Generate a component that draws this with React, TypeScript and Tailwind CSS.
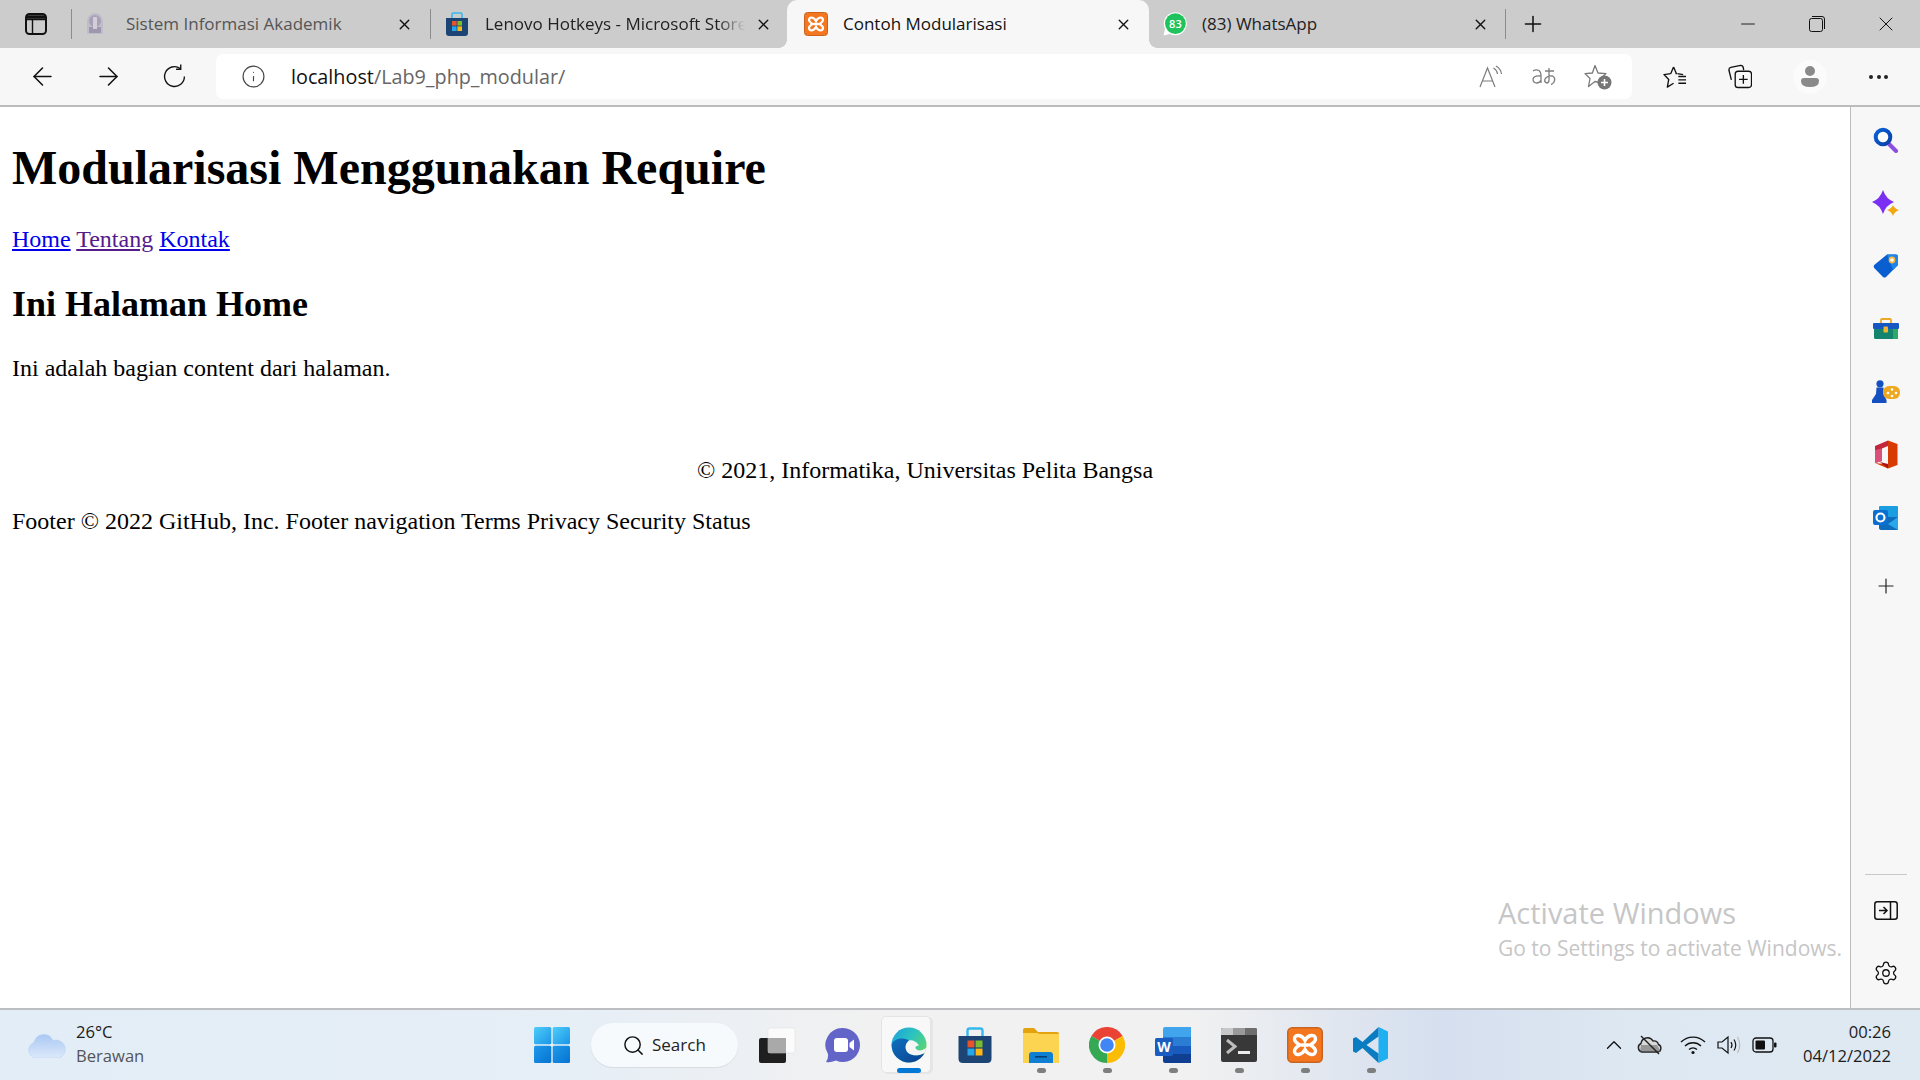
import React from "react";
import { ArrowLeft, ArrowRight, ChevronUp, Info, Minus, Plus, Search, Settings, X } from "lucide-react";

// tab favicons
const SealIcon = () => (
  <svg width="18" height="24" viewBox="0 0 18 24" className="opacity-60">
    <path d="M9 1 C14 1 17 5 17 10 L17 22 L1 22 L1 10 C1 5 4 1 9 1Z" fill="#b9b2c9" />
    <circle cx="9" cy="9" r="6" fill="#8f86ab" />
    <rect x="3" y="15" width="12" height="6" fill="#7d7499" />
    <rect x="7" y="5" width="4" height="12" fill="#d5d0df" />
  </svg>
);

const StoreIcon = ({ size = 24 }: { size?: number }) => (
  <svg width={size} height={size} viewBox="0 0 24 24">
    <path d="M7 6 V2.5 Q7 1 8.5 1 H15.5 Q17 1 17 2.5 V6" fill="none" stroke="#35b8ee" strokeWidth="1.6" />
    <path d="M1 6 H23 V21 Q23 24 20 24 H4 Q1 24 1 21Z" fill="#1c4474" />
    <rect x="7" y="9" width="4.6" height="4.6" fill="#e8532b" />
    <rect x="12.4" y="9" width="4.6" height="4.6" fill="#7ebb2c" />
    <rect x="7" y="14.4" width="4.6" height="4.6" fill="#25a5ea" />
    <rect x="12.4" y="14.4" width="4.6" height="4.6" fill="#fcb714" />
  </svg>
);

const XamppIcon = ({ size = 24 }: { size?: number }) => (
  <svg width={size} height={size} viewBox="0 0 24 24">
    <rect x="0.5" y="0.5" width="23" height="23" rx="3" fill="#f4761f" stroke="#c9641f" />
    <path
      d="M12 9 C10 5 5 4.5 5 8 C5 10 7 11 8.5 12 C7 13 5 14 5 16 C5 19.5 10 19 12 15 C14 19 19 19.5 19 16 C19 14 17 13 15.5 12 C17 11 19 10 19 8 C19 4.5 14 5 12 9Z M9.5 12 H14.5"
      fill="none"
      stroke="#fff"
      strokeWidth="2.3"
    />
  </svg>
);

const WhatsAppIcon = () => (
  <svg width="24" height="24" viewBox="0 0 24 24">
    <path d="M0.5 23.5 L2 17 A11.5 11.5 0 1 1 7 22Z" fill="#fff" />
    <circle cx="12.4" cy="11.6" r="10.4" fill="#1fc25c" />
    <text x="12.4" y="15.6" textAnchor="middle" fontSize="11" fontWeight="600" fill="#fff" fontFamily="Open Sans">
      83
    </text>
  </svg>
);

// edge sidebar
const SideSearch = () => (
  <svg width="26" height="26" viewBox="0 0 26 26">
    <defs>
      <linearGradient id="ss" x1="0" y1="0" x2="1" y2="1">
        <stop offset="0" stopColor="#0a63d8" />
        <stop offset="1" stopColor="#0b3fa8" />
      </linearGradient>
    </defs>
    <path d="M15 16 L23 24" stroke="#8a4fe0" strokeWidth="4" strokeLinecap="round" />
    <circle cx="10" cy="10" r="7.3" fill="#fff" stroke="url(#ss)" strokeWidth="4" />
  </svg>
);

const SideSpark = () => (
  <svg width="28" height="26" viewBox="0 0 28 26">
    <path d="M11 0 Q14 9 22 12 Q14 15 11 24 Q8 15 0 12 Q8 9 11 0Z" fill="#7b2ff2" />
    <path d="M21 15 Q22.5 18.5 27 20 Q22.5 21.5 21 26 Q19.5 21.5 15 20 Q19.5 18.5 21 15Z" fill="#f2a811" />
  </svg>
);

const SideTag = () => (
  <svg width="26" height="24" viewBox="0 0 26 24">
    <path d="M14 0.5 H23 Q25 0.5 25 2.5 V11 L13 23 Q11.5 24 10 23 L1.2 14 Q0 12.5 1.2 11Z" fill="#0a5fd0" />
    <path d="M14 0.5 H23 Q25 0.5 25 2.5 V11 L20 16Z" fill="#1f86e8" />
    <circle cx="19" cy="6" r="2.6" fill="#fff" stroke="#f6b73c" strokeWidth="1.6" />
  </svg>
);

const SideBox = () => (
  <svg width="26" height="22" viewBox="0 0 26 22">
    <path d="M8 5 V2 Q8 1 9 1 H17 Q18 1 18 2 V5" fill="none" stroke="#eaa824" strokeWidth="1.8" />
    <rect x="1" y="10" width="24" height="11" rx="1.5" fill="#14846f" />
    <rect x="20" y="10" width="5" height="11" fill="#2fa96a" />
    <rect x="0" y="5" width="26" height="6" rx="1" fill="#1558c4" />
    <rect x="10.5" y="8.5" width="4.5" height="6" rx="1" fill="#f3b52f" />
  </svg>
);

const SideGames = () => (
  <svg width="28" height="24" viewBox="0 0 28 24">
    <circle cx="8" cy="3.8" r="3.6" fill="#1550c0" />
    <path d="M4.5 7.5 H11.5 L11.5 14 L14.5 20 V23 H0 V20 L4 14Z" fill="#1550c0" />
    <rect x="11" y="6" width="17" height="13" rx="6" fill="#eea820" />
    <circle cx="16" cy="13" r="1.3" fill="#fff" />
    <circle cx="20" cy="9.5" r="1.3" fill="#fff" />
    <circle cx="24" cy="13" r="1.3" fill="#fff" />
    <circle cx="20" cy="16" r="1.3" fill="#fff" />
  </svg>
);

const SideOffice = () => (
  <svg width="24" height="29" viewBox="0 0 24 29">
    <path d="M14 0.5 L23.5 4 V25 L14 28.5 L1 23 L14 24.5Z" fill="#d83b01" />
    <path d="M1 6 L14 0.5 V6 L8 8.5 V21 L1 23Z" fill="#c2273a" />
    <path d="M1 10 L8 8.5 V21 L1 23Z" fill="#d9517a" />
    <path d="M6 22 L14 24 V28.5 Z" fill="#a8141e" />
  </svg>
);

const SideOutlook = () => (
  <svg width="26" height="24" viewBox="0 0 26 24">
    <rect x="6" y="0" width="19" height="13" rx="1" fill="#1b9de2" />
    <path d="M6 11 L25 11 V24 H9 Q6 24 6 22Z" fill="#0f6cbd" />
    <path d="M25 11 L15 18 L25 24Z" fill="#28a8ea" />
    <rect x="0" y="4" width="15" height="15" rx="2" fill="#0a6fd0" />
    <circle cx="7.5" cy="11.5" r="4" fill="none" stroke="#fff" strokeWidth="2.2" />
  </svg>
);

// taskbar
const WinLogo = () => (
  <svg width="36" height="36" viewBox="0 0 36 36">
    <defs>
      <linearGradient id="wa" x1="0" y1="0" x2="1" y2="1">
        <stop offset="0" stopColor="#4fcdf8" />
        <stop offset="1" stopColor="#1a95e8" />
      </linearGradient>
      <linearGradient id="wb" x1="0" y1="0" x2="1" y2="1">
        <stop offset="0" stopColor="#1e9aea" />
        <stop offset="1" stopColor="#0673d1" />
      </linearGradient>
    </defs>
    <rect x="0" y="0" width="17.3" height="17.3" rx="1.5" fill="url(#wa)" />
    <rect x="18.7" y="0" width="17.3" height="17.3" rx="1.5" fill="url(#wa)" />
    <rect x="0" y="18.7" width="17.3" height="17.3" rx="1.5" fill="url(#wb)" />
    <rect x="18.7" y="18.7" width="17.3" height="17.3" rx="1.5" fill="url(#wb)" />
  </svg>
);

const TaskView = () => (
  <svg width="38" height="36" viewBox="0 0 38 36">
    <rect x="1" y="11" width="27" height="25" rx="2" fill="#1f1f1f" />
    <rect x="10" y="1" width="27" height="25" rx="2" fill="#ffffff" fillOpacity="0.75" stroke="#ddd" strokeWidth="0.5" />
    <rect x="10" y="11" width="18" height="15" fill="#a9a9a9" />
  </svg>
);

const TeamsIcon = () => (
  <svg width="36" height="36" viewBox="0 0 36 36">
    <path d="M18 1 A17 17 0 1 1 11 33.5 Q5 36 1 35 Q3.5 32 3 27 A17 17 0 0 1 18 1Z" fill="#6264c7" />
    <rect x="9" y="11" width="14" height="14" rx="3" fill="#fff" />
    <path d="M24.5 16 L29 12.5 V23.5 L24.5 20Z" fill="#fff" />
  </svg>
);

const EdgeIcon = () => (
  <svg width="36" height="36" viewBox="0 0 36 36">
    <defs>
      <linearGradient id="ea" x1="0" y1="0" x2="1" y2="0.7">
        <stop offset="0" stopColor="#1b9ede" />
        <stop offset="0.5" stopColor="#2cc3c0" />
        <stop offset="1" stopColor="#62d765" />
      </linearGradient>
      <linearGradient id="eb" x1="0" y1="0" x2="1" y2="1">
        <stop offset="0" stopColor="#0f6fbf" />
        <stop offset="1" stopColor="#0c3f8f" />
      </linearGradient>
    </defs>
    <circle cx="18" cy="18" r="17.5" fill="url(#ea)" />
    <path d="M0.6 18 C0.6 28 9 35.5 18 35.5 C25 35.5 30.5 31.5 33.5 26 C28 29 22 29 18 26.5 C13.5 23.5 13.5 17 18 13.5 C11 9.5 2 12 0.6 18Z" fill="url(#eb)" />
    <path d="M18 13.5 C13.5 17 13.5 23.5 18 26.5 C22 29 28 29 33.5 26 C34.5 24 35 22.5 35 21 C31 24.5 25.5 24 24.5 21 C24 19.5 26 18.5 28 18.5 C26 14.5 21 12.5 18 13.5Z" fill="#f5f5f5" />
  </svg>
);

const FolderIcon = () => (
  <svg width="36" height="36" viewBox="0 0 36 36">
    <path d="M0 3 Q0 1 2 1 H11 L15 5 H34 Q36 5 36 7 V12 H0Z" fill="#e3a20e" />
    <path d="M0 6 H14 L17 7 H36 V36 H0Z" fill="#fdd352" />
    <path d="M6 36 V28 Q6 25 9 25 H27 Q30 25 30 28 V36Z" fill="#0f7fd1" />
    <rect x="12" y="29" width="12" height="1.6" fill="#063f75" />
  </svg>
);

const ChromeIcon = () => (
  <svg width="36" height="36" viewBox="0 0 36 36">
    <path d="M18 18 L33.6 9 A18 18 0 0 0 2.4 9Z" fill="#ea4335" />
    <path d="M18 18 L2.4 9 A18 18 0 0 0 18 36Z" fill="#34a853" />
    <path d="M18 18 L18 36 A18 18 0 0 0 33.6 9Z" fill="#fbbc04" />
    <circle cx="18" cy="18" r="8.5" fill="#fff" />
    <circle cx="18" cy="18" r="6.8" fill="#4285f4" />
  </svg>
);

const WordIcon = () => (
  <svg width="36" height="36" viewBox="0 0 36 36">
    <path d="M8 2 Q8 0 10 0 H36 V10 H8Z" fill="#41a5ee" />
    <rect x="8" y="10" width="28" height="9" fill="#2b7cd3" />
    <rect x="8" y="19" width="28" height="8" fill="#185abd" />
    <path d="M8 27 H36 V36 H10 Q8 36 8 34Z" fill="#103f91" />
    <rect x="0" y="11" width="18" height="18" rx="1.5" fill="#1a5cc0" />
    <text x="9" y="25" textAnchor="middle" fontSize="14" fontWeight="700" fill="#fff" fontFamily="Open Sans">
      W
    </text>
  </svg>
);

const TerminalIcon = () => (
  <svg width="36" height="34" viewBox="0 0 36 34">
    <rect x="0" y="0" width="36" height="34" rx="2" fill="#383838" />
    <path d="M0 2 Q0 0 2 0 H12 V7 H0Z" fill="#c8c8c8" />
    <rect x="12" y="0" width="12" height="7" fill="#9a9a9a" />
    <path d="M24 0 H34 Q36 0 36 2 V7 H24Z" fill="#6e6e6e" />
    <path d="M6 12 L14 18.5 L6 25" fill="none" stroke="#bdbdbd" strokeWidth="3" />
    <rect x="17" y="23" width="12" height="3" fill="#ececec" />
  </svg>
);

const VsCodeIcon = () => (
  <svg width="36" height="36" viewBox="0 0 36 36">
    <path d="M25.5 0 L35 4.5 V31.5 L25.5 36 L25.5 0Z" fill="#1fb0f2" />
    <path d="M25.5 0 L9.5 15 L3 10 L0 11.5 V24.5 L3 26 L9.5 21 L25.5 36 V26.5 L13.5 18 L25.5 9.5Z" fill="#0a7cc1" />
  </svg>
);

const TabCross = () => <X size={17} strokeWidth={1.9} className="text-[#111] shrink-0" />;

type TabProps = {
  width: string;
  pad: string;
  textPad: string;
  icon: React.ReactNode;
  title: string;
  textClass: string;
  closePad: string;
  fade?: boolean;
};

function Tab({ width, pad, textPad, icon, title, textClass, closePad, fade }: TabProps) {
  return (
    <div className={`flex h-full shrink-0 items-center ${width} ${pad} ${closePad}`}>
      <div className="flex w-6 shrink-0 justify-center">{icon}</div>
      <div
        className={`mr-[10px] min-w-0 flex-1 overflow-hidden whitespace-nowrap text-[17px] ${textPad} ${textClass} ${
          fade ? "[mask-image:linear-gradient(to_right,black_90%,transparent_100%)]" : ""
        }`}
      >
        {title}
      </div>
      <TabCross />
    </div>
  );
}

const Sep = () => <div className="h-[30px] w-px shrink-0 bg-[#8c8c8c]" />;

function TabStrip() {
  return (
    <div className="flex h-12 items-center bg-[#cccccc]">
      <div className="flex h-full w-[71px] shrink-0 items-center justify-center">
        <svg width="22" height="22" viewBox="0 0 22 22" fill="none" stroke="#111" strokeWidth="2">
          <rect x="1" y="1" width="20" height="20" rx="3.5" />
          <path d="M1 6.5 H21 M7.5 6.5 V21" strokeWidth="1.4" />
          <path d="M1 4 H21" strokeWidth="3.5" />
        </svg>
      </div>
      <Sep />
      <Tab
        width="w-[358px]"
        pad="pl-[11px]"
        textPad="pl-[19px]"
        closePad="pr-[17px]"
        icon={<SealIcon />}
        title="Sistem Informasi Akademik"
        textClass="text-[#555555]"
      />
      <Sep />
      <Tab
        width="w-[356px]"
        pad="pl-[14px]"
        textPad="pl-[16px]"
        closePad="pr-[15px]"
        icon={<StoreIcon />}
        title="Lenovo Hotkeys - Microsoft Store"
        textClass="text-[#222222]"
        fade
      />
      <div className="relative h-full w-[362px] shrink-0 rounded-t-[10px] bg-[#f7f7f7]">
        <div className="absolute bottom-0 -left-[8px] h-[8px] w-[8px] bg-[radial-gradient(circle_at_0_0,transparent_7.5px,#f7f7f7_8px)]" />
        <div className="absolute -right-[8px] bottom-0 h-[8px] w-[8px] bg-[radial-gradient(circle_at_100%_0,transparent_7.5px,#f7f7f7_8px)]" />
        <Tab
          width="w-full"
          pad="pl-[17px]"
          textPad="pl-[15px]"
          closePad="pr-[17px]"
          icon={<XamppIcon />}
          title="Contoh Modularisasi"
          textClass="text-[#111111]"
        />
      </div>
      <Tab
        width="w-[356px]"
        pad="pl-[14px]"
        textPad="pl-[15px]"
        closePad="pr-[16px]"
        icon={<WhatsAppIcon />}
        title="(83) WhatsApp"
        textClass="text-[#222222]"
      />
      <Sep />
      <div className="flex h-full w-[54px] shrink-0 items-center justify-center">
        <Plus size={26} strokeWidth={1.4} className="text-[#111]" />
      </div>
      <div className="flex-1" />
      <div className="flex h-full w-[69px] items-center justify-center">
        <Minus size={22} strokeWidth={1} className="text-[#111]" />
      </div>
      <div className="flex h-full w-[69px] items-center justify-center">
        <svg width="16" height="16" viewBox="0 0 16 16" fill="none" stroke="#111" strokeWidth="1">
          <rect x="0.5" y="2.5" width="13" height="13" rx="2" />
          <path d="M3 0.5 H13 Q15.5 0.5 15.5 3 V13" />
        </svg>
      </div>
      <div className="flex h-full w-[69px] items-center justify-center">
        <X size={24} strokeWidth={1} className="text-[#111]" />
      </div>
    </div>
  );
}

function Toolbar() {
  return (
    <div className="flex h-[59px] items-start border-b-2 border-[#bcbcbc] bg-[#f7f7f7] pt-[6px]">
      <div className="flex h-[45px] w-[216px] shrink-0 items-center pl-[15px]">
        <div className="flex w-[54px] justify-center">
          <ArrowLeft size={29} strokeWidth={1.3} className="text-[#111]" />
        </div>
        <div className="ml-[12px] flex w-[54px] justify-center">
          <ArrowRight size={29} strokeWidth={1.3} className="text-[#111]" />
        </div>
        <div className="ml-[12px] flex w-[54px] justify-center">
          <svg width="25" height="25" viewBox="0 0 24 24" fill="none" stroke="#111" strokeWidth="1.3">
            <path d="M21.5 12 A9.5 9.5 0 1 1 17.5 4.3" />
            <path d="M18 0.5 V5 H13.5" />
          </svg>
        </div>
      </div>
      <div className="flex h-[45px] w-[1416px] shrink-0 items-center rounded-[7px] bg-white">
        <div className="flex w-[75px] justify-center">
          <Info size={25} strokeWidth={1.1} className="text-[#444]" />
        </div>
        <div className="text-[19.8px] text-[#666666]">
          <span className="text-[#111111]">localhost</span>/Lab9_php_modular/
        </div>
        <div className="flex-1" />
        <svg width="24" height="24" viewBox="0 0 24 24" fill="none" stroke="#7d7d7d" strokeWidth="1.2" className="mr-[28px]">
          <path d="M1 22 L8.5 3 L16 22 M3.5 16 H13.5" />
          <path d="M14.5 3 Q18 5 18.5 9 M17 1 Q22 4 22.5 9" />
        </svg>
        <svg width="26" height="22" viewBox="0 0 26 22" fill="none" stroke="#7d7d7d" strokeWidth="1.3" className="mr-[27px]">
          <path d="M2 5 Q5 3 8 4.5 Q10 6 10 9 V17 M10 10 Q3 9 2 13 Q2 17 6 17 Q9 16.5 10 14" />
          <path d="M14 5 H23 M18 2 V14 Q18 17 15.5 17 Q13 16 14 13 Q16.5 9 21.5 10 Q25 12 23 16 Q22 18 20 18.5" />
        </svg>
        <svg width="28" height="26" viewBox="0 0 28 26" className="mr-[20px]">
          <path d="M11 1.5 L14 9 L22 9.6 L16 15 L17 19 L11 17.5 L4.5 22.5 L6 14.5 L1 9.6 L8.4 9Z" fill="none" stroke="#7a7a7a" strokeWidth="1.3" strokeLinejoin="round" />
          <circle cx="20.5" cy="18.5" r="7" fill="#767676" />
          <path d="M20.5 15 V22 M17 18.5 H24" stroke="#fff" strokeWidth="1.6" />
        </svg>
      </div>
      <div className="flex h-[45px] flex-1 items-center text-[#111]">
        <div className="ml-[31px] flex w-6 justify-center">
          <svg width="25" height="24" viewBox="0 0 25 24" fill="none" stroke="#111" strokeWidth="1.4" strokeLinejoin="round">
            <path d="M11 1.5 L14 8.5 H13 M15 8.5 L21 9.5 M8 8.5 L1 9.5 L6 14.5 L4.5 22.5 L11 18.5 M8 8.5 L11 1.5" />
            <path d="M16 11.5 H24 M16 15 H24 M16 18.5 H24" />
          </svg>
        </div>
        <div className="ml-[41px] flex w-6 justify-center">
          <svg width="25" height="25" viewBox="0 0 25 25" fill="none" stroke="#111" strokeWidth="1.4">
            <path d="M3.5 16 L1 6 Q0.7 3.5 3 3 L13 1 Q15.5 0.8 16 3.5 L16.3 6" />
            <rect x="7.5" y="7" width="17" height="17" rx="3" />
            <path d="M16 11 V20 M11.5 15.5 H20.5" />
          </svg>
        </div>
        <div className="ml-[41px] flex h-[34px] w-[34px] items-center justify-center rounded-full bg-[#fbfbfb]">
          <svg width="18" height="21" viewBox="0 0 18 21" fill="#8a8a8a">
            <circle cx="9" cy="5" r="5" />
            <path d="M0 15 Q0 12 3 12 H15 Q18 12 18 15 Q18 21 9 21 Q0 21 0 15Z" />
          </svg>
        </div>
        <div className="ml-[42px] flex gap-[3.5px]">
          <div className="h-[4px] w-[4px] rounded-full bg-[#222]" />
          <div className="h-[4px] w-[4px] rounded-full bg-[#222]" />
          <div className="h-[4px] w-[4px] rounded-full bg-[#222]" />
        </div>
      </div>
    </div>
  );
}

function Page() {
  return (
    <div className="relative w-[1850px] shrink-0 bg-white px-3 [font-family:'Liberation_Serif',serif] text-[24px] leading-[28px] text-black">
      <h1 className="mt-[33px] text-[48px] leading-[55px] font-bold">Modularisasi Menggunakan Require</h1>
      <p className="mt-[30px]">
        <a className="text-[#0000ee] underline" href="#home">
          Home
        </a>{" "}
        <a className="text-[#551a8b] underline" href="#tentang">
          Tentang
        </a>{" "}
        <a className="text-[#0000ee] underline" href="#kontak">
          Kontak
        </a>
      </p>
      <h2 className="mt-[31px] text-[36px] leading-[41px] font-bold">Ini Halaman Home</h2>
      <p className="mt-[29px]">Ini adalah bagian content dari halaman.</p>
      <p className="mt-[74px] text-center">© 2021, Informatika, Universitas Pelita Bangsa</p>
      <p className="mt-[23px]">Footer © 2022 GitHub, Inc. Footer navigation Terms Privacy Security Status</p>

      {/* watermark */}
      <div className="absolute top-[788px] left-[1498px] [font-family:'Open_Sans',sans-serif] whitespace-nowrap text-[#c6c6c6]">
        <div className="text-[29px] leading-[36px]">Activate Windows</div>
        <div className="mt-[3px] text-[21px] leading-[28px]">Go to Settings to activate Windows.</div>
      </div>
    </div>
  );
}

const sideItems = [
  <SideSearch key="search" />,
  <SideSpark key="spark" />,
  <SideTag key="tag" />,
  <SideBox key="box" />,
  <SideGames key="games" />,
  <SideOffice key="office" />,
  <SideOutlook key="outlook" />,
];

function Sidebar() {
  return (
    <div className="flex flex-1 flex-col border-l border-[#bcbcbc] bg-[#f7f7f7] pt-px">
      {sideItems.map((item) => (
        <div key={item.key} className="flex h-[63px] items-center justify-center">
          {item}
        </div>
      ))}
      <div className="mt-[5px] flex h-[63px] items-center justify-center">
        <Plus size={24} strokeWidth={1.2} className="text-[#222]" />
      </div>
      <div className="mt-auto mx-auto h-px w-[42px] bg-[#c8c8c8]" />
      <div className="mt-[17px] flex h-[36px] items-center justify-center">
        <svg width="24" height="19" viewBox="0 0 24 19" fill="none" stroke="#111" strokeWidth="1.5">
          <rect x="0.8" y="0.8" width="22.4" height="17.4" rx="2.5" />
          <path d="M16.5 1 V18 M5 9.5 H12.5 M9.5 6 L13 9.5 L9.5 13" />
        </svg>
      </div>
      <div className="mt-[27px] mb-[17px] flex h-[36px] items-center justify-center">
        <Settings size={26} strokeWidth={1.2} className="text-[#111]" />
      </div>
    </div>
  );
}

const taskIcons = [
  { key: "taskview", icon: <TaskView /> },
  { key: "teams", icon: <TeamsIcon /> },
  { key: "edge", icon: <EdgeIcon />, active: true },
  { key: "store", icon: <StoreIcon size={36} /> },
  { key: "explorer", icon: <FolderIcon />, running: true },
  { key: "chrome", icon: <ChromeIcon />, running: true },
  { key: "word", icon: <WordIcon />, running: true },
  { key: "terminal", icon: <TerminalIcon />, running: true },
  { key: "xampp", icon: <XamppIcon size={36} />, running: true },
  { key: "vscode", icon: <VsCodeIcon />, running: true },
];

function Taskbar() {
  return (
    <div className="flex h-[72px] items-center border-t-2 border-[#bcbec2] bg-[linear-gradient(to_right,#e2edf7_0%,#e6eef6_30%,#f1f1f1_45%,#f1f1f1_62%,#d5dfef_75%,#dde8f2_85%,#dfe9f2_100%)] text-[#1c1c1c]">
      <div className="flex w-[534px] shrink-0 items-center pl-[28px]">
        <svg width="38" height="26" viewBox="0 0 38 26">
          <defs>
            <linearGradient id="cl" x1="0" y1="0" x2="0" y2="1">
              <stop offset="0" stopColor="#a9c8f3" />
              <stop offset="1" stopColor="#dce9fb" />
            </linearGradient>
          </defs>
          <path d="M8 26 A8 8 0 0 1 6 10.5 A10 10 0 0 1 25 8.5 A8.5 8.5 0 0 1 31 26Z" fill="url(#cl)" stroke="#b7cff0" strokeWidth="0.5" />
        </svg>
        <div className="ml-[10px] -mt-[2px] text-[16.6px] leading-[24px]">
          <div>26°C</div>
          <div className="text-[#555]">Berawan</div>
        </div>
      </div>
      <WinLogo />
      <div className="ml-[21px] flex h-[44px] w-[147px] shrink-0 items-center rounded-full bg-[#f7fafc] pl-[31px] shadow-[0_1px_1px_rgba(0,0,0,0.08)]">
        <Search size={23} strokeWidth={1.5} className="text-[#111]" />
        <span className="ml-[7px] text-[17px] text-[#222]">Search</span>
      </div>
      <div className="ml-[6px] flex h-full">
        {taskIcons.map((t) => (
          <div key={t.key} className="relative flex h-full w-[66px] items-center justify-center">
            {t.active && (
              <div className="absolute top-[6px] left-[5px] h-[57px] w-[50px] rounded-[5px] border border-[#e4e4e4] bg-[#f8f8f8] shadow-[2px_1px_0_#e6e6e6]" />
            )}
            <div className="relative">{t.icon}</div>
            {t.active && <div className="absolute top-[58px] left-[21px] h-[5px] w-[24px] rounded-full bg-[#0078d4]" />}
            {t.running && <div className="absolute top-[58px] left-[29px] h-[5px] w-[9px] rounded-full bg-[#7e7e7e]" />}
          </div>
        ))}
      </div>
      <div className="flex-1" />
      <ChevronUp size={26} strokeWidth={1.2} className="mr-[10px] text-[#111]" />
      <svg width="26" height="20" viewBox="0 0 26 20" className="mr-[17px]">
        <path d="M5 17 A4.5 4.5 0 0 1 4 8.5 A6.5 6.5 0 0 1 16 6 A5 5 0 0 1 21.5 9.5 A4 4 0 0 1 21 17Z" fill="#d9d9d9" stroke="#222" strokeWidth="1.4" />
        <path d="M4 10 L20 10 L24 17 H3Z" fill="#555" opacity="0.5" />
        <path d="M4 1 L22 19" stroke="#222" strokeWidth="1.4" />
      </svg>
      <svg width="26" height="20" viewBox="0 0 26 20" fill="none" stroke="#111" strokeWidth="1.3" className="mr-[11px]">
        <path d="M1 7 A17 17 0 0 1 25 7 M5 11 A11.5 11.5 0 0 1 21 11 M9 14.5 A6 6 0 0 1 17 14.5" />
        <circle cx="13" cy="17.5" r="1.6" fill="#111" stroke="none" />
      </svg>
      <svg width="24" height="20" viewBox="0 0 24 20" fill="none" stroke="#111" strokeWidth="1.2" className="mr-[11px]">
        <path d="M1 7 H5 L11 2 V18 L5 13 H1Z" />
        <path d="M14 7 Q16 10 14 13 M17 4.5 Q20.5 10 17 15.5" />
        <path d="M20.5 2 Q25 10 20.5 18" stroke="#bbb" />
      </svg>
      <svg width="25" height="16" viewBox="0 0 25 16" fill="none" className="mr-[26px]">
        <rect x="1" y="1" width="20" height="14" rx="3" stroke="#111" strokeWidth="1.3" />
        <rect x="3.5" y="3.5" width="9.5" height="9" rx="1" fill="#111" />
        <rect x="22" y="5.5" width="2.5" height="5" rx="1" fill="#111" />
      </svg>
      <div className="mr-[29px] -mt-[2px] text-right text-[16.6px] leading-[24px]">
        <div>00:26</div>
        <div>04/12/2022</div>
      </div>
    </div>
  );
}

export default function App() {
  return (
    <div className="flex h-[1080px] w-[1920px] flex-col overflow-hidden [font-family:'Open_Sans',sans-serif]">
      <TabStrip />
      <Toolbar />
      <div className="flex h-[901px]">
        <Page />
        <Sidebar />
      </div>
      <Taskbar />
    </div>
  );
}
